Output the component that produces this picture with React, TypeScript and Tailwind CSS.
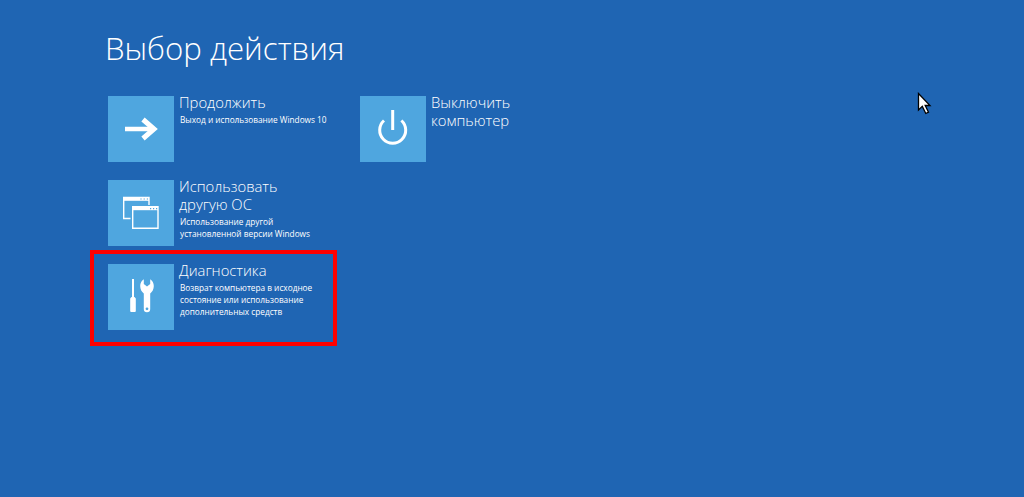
const font = { fontFamily: '"Open Sans", "Noto Sans", sans-serif' };

function Arrow() {
  return (
    <svg width="66" height="66" viewBox="0 0 66 66" fill="none" stroke="#fff">
      <path d="M17 33H46" strokeWidth="4.5" />
      <path d="M35 23.5L46 33L35 42.5" strokeWidth="5" />
    </svg>
  );
}

function Power() {
  return (
    <svg width="66" height="66" viewBox="0 0 66 66" fill="none" stroke="#fff" strokeWidth="3">
      <path d="M32.7 14V34" />
      <path d="M24 24.5A13 13 0 1 0 41.4 24.5" />
    </svg>
  );
}

function Windows() {
  return (
    <svg width="66" height="66" viewBox="0 0 66 66" fill="none" stroke="#fff">
      <path d="M22.5 38.5H15.7V17.4H41V25" strokeWidth="1.4" />
      <path d="M15.7 19H41" strokeWidth="3.6" />
      <path d="M24.7 26.7H50V48.3H24.7Z" strokeWidth="1.4" />
      <path d="M24.7 28.4H50" strokeWidth="3.6" />
      <path d="M32.4 19h1.2M35.6 19h1.2M38.8 19h1.2M42 28.6h1.2M45 28.6h1.2M48 28.6h1.2" stroke="#4fa6df" strokeWidth="1.2" />
    </svg>
  );
}

function Tools() {
  return (
    <svg width="66" height="66" viewBox="0 0 66 66" fill="#fff">
      <path d="M24 15h2v18h-2z" />
      <path d="M23.5 33h3l1.3 1.500V47a1 1 0 0 1-1 1h-3.600a1 1 0 0 1-1-1V34.500z" />
      <path
        fillRule="evenodd"
        d="M35.800 15.200v4.800l3.200 2.600 3.200-2.600v-4.800c2.200 1.200 3.600 3.800 3.600 6.800 0 3.300-1.500 6-3.600 7.400V45a3.200 3.200 0 0 1-6.400 0V29.400c-2.100-1.400-3.600-4.100-3.600-7.400 0-3 1.400-5.600 3.600-6.800zM39 43.400a1.400 1.400 0 1 0 0 2.800 1.400 1.400 0 0 0 0-2.800z"
      />
    </svg>
  );
}

function Tile({
  icon,
  title,
  desc,
}: {
  icon: React.ReactNode;
  title: string[];
  desc?: string[];
}) {
  return (
    <div className="flex h-[66px] gap-[5px]">
      <div className="h-[66px] w-[66px] shrink-0 bg-[#4fa6df]">{icon}</div>
      <div className="-mt-[3px] text-white">
        {title.map((t) => (
          <div key={t} className="h-[18px] text-[14.8px] leading-[18px] font-light whitespace-nowrap">
            {t}
          </div>
        ))}
        {desc && (
          <div className="mt-[3px] pl-[1px]">
            {desc.map((d) => (
              <div key={d} className="h-[12px] text-[8.28px] leading-[12px] whitespace-nowrap">
                {d}
              </div>
            ))}
          </div>
        )}
      </div>
    </div>
  );
}

export default function App() {
  return (
    <div className="relative h-[497px] w-[1024px] overflow-hidden bg-[#1f65b3]" style={font}>
      <div className="pt-[27px] pl-[108px]">
        <h1 className="-ml-[3px] h-[69px] text-[31.2px] leading-[42px] font-light text-white">Выбор действия</h1>
        <div className="grid grid-cols-[252px_200px] grid-rows-[66px_66px_66px] gap-y-[18px]">
          <Tile icon={<Arrow />} title={["Продолжить"]} desc={["Выход и использование Windows 10"]} />
          <Tile icon={<Power />} title={["Выключить", "компьютер"]} />
          <Tile
            icon={<Windows />}
            title={["Использовать", "другую ОС"]}
            desc={["Использование другой", "установленной версии Windows"]}
          />
          <div />
          <Tile
            icon={<Tools />}
            title={["Диагностика"]}
            desc={["Возврат компьютера в исходное", "состояние или использование", "дополнительных средств"]}
          />
        </div>
      </div>
      <div className="absolute top-[250px] left-[90px] h-[96px] w-[247px] border-4 border-[#ff0000]" />
      <svg className="absolute top-[92px] left-[917px]" width="15" height="23" viewBox="0 0 15 23">
        <path d="M1.500 1.500V18L5.300 14.400L8.800 21.500L11.500 20.200L8.200 13.500H13Z" fill="#fff" stroke="#000" strokeWidth="1.300" />
      </svg>
    </div>
  );
}
